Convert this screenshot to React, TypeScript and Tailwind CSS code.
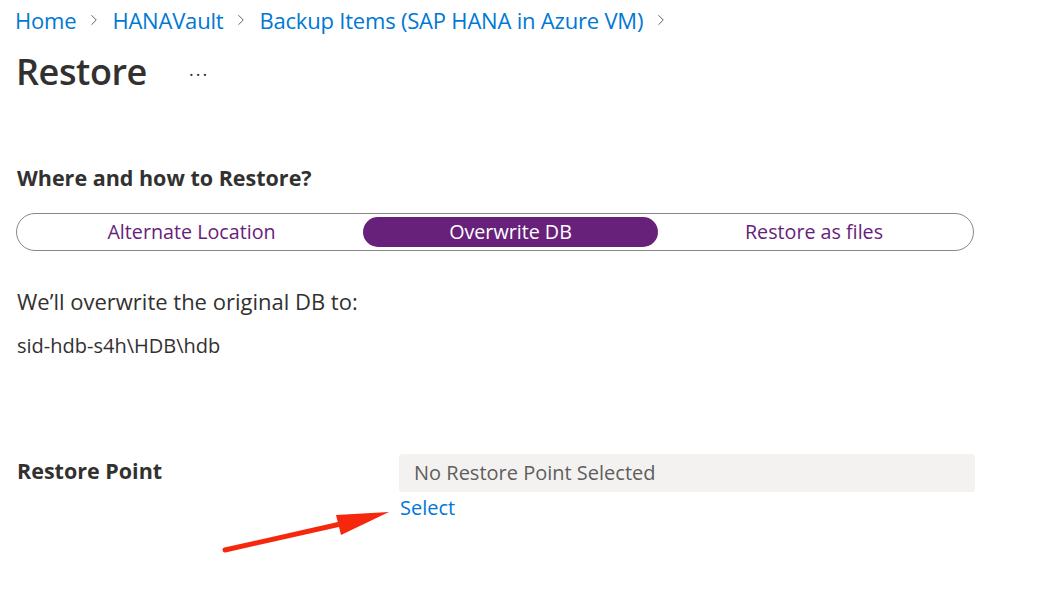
import { ChevronRight } from "lucide-react";

const font = { fontFamily: '"Open Sans", "Noto Sans", sans-serif' };

export default function App() {
  const crumbs = ["Home", "HANAVault", "Backup Items (SAP HANA in Azure VM)"];

  return (
    <div className="relative h-[594px] w-[1042px] overflow-hidden bg-white text-[#323130]" style={font}>
      <div className="flex h-[40px] items-center pl-[15px]">
        {crumbs.map((c) => (
          <div key={c} className="flex items-center">
            <a className="text-[22px] tracking-[-0.2px] text-[#0078d4]">{c}</a>
            <ChevronRight className="mx-[9px] h-[18px] w-[18px] text-[#605e5c]" strokeWidth={1.3} />
          </div>
        ))}
      </div>

      <div className="mt-[10px] flex items-center pl-[16px]">
        <h1 className="text-[36px] font-semibold leading-[44px] tracking-[-0.4px]">Restore</h1>
        <span className="ml-[42px] mt-[4px] text-[18px] tracking-[2px] text-[#323130]">···</span>
      </div>

      <h2 className="mt-[70px] pl-[17px] text-[21.5px] font-bold leading-[28px]">Where and how to Restore?</h2>

      <div className="ml-[16px] mt-[21px] flex h-[38px] w-[958px] items-center rounded-full border border-[#8a8886] px-[3px]">
        <div className="flex w-[343px] justify-center text-[19.7px] text-[#68217a]">Alternate Location</div>
        <div className="flex h-[30px] w-[295px] items-center justify-center rounded-full bg-[#68217a] text-[19.7px] text-white">
          Overwrite DB
        </div>
        <div className="flex flex-1 justify-center text-[19.7px] text-[#68217a]">Restore as files</div>
      </div>

      <p className="mt-[36px] pl-[17px] text-[22px] leading-[28px]">We’ll overwrite the original DB to:</p>
      <p className="mt-[19px] pl-[17px] text-[20px] leading-[24px]">sid-hdb-s4h\HDB\hdb</p>

      <div className="mt-[96px] flex pl-[17px]">
        <div className="w-[382px] pt-[3px] text-[21.5px] font-bold leading-[28px]">Restore Point</div>
        <div className="flex flex-col">
          <div className="flex h-[38px] w-[576px] items-center rounded-[3px] bg-[#f3f2f1] pl-[15px] text-[20px] text-[#605e5c]">
            No Restore Point Selected
          </div>
          <a className="mt-[2px] pl-[1px] text-[20px] leading-[28px] text-[#0078d4]">Select</a>
        </div>
      </div>

      <svg className="absolute left-0 top-0" width="1042" height="594" viewBox="0 0 1042 594">
        <line x1="225" y1="550" x2="345" y2="523" stroke="#f5280d" strokeWidth="5" strokeLinecap="round" />
        <polygon points="389,512 336,515 341,535" fill="#f5280d" />
      </svg>
    </div>
  );
}
